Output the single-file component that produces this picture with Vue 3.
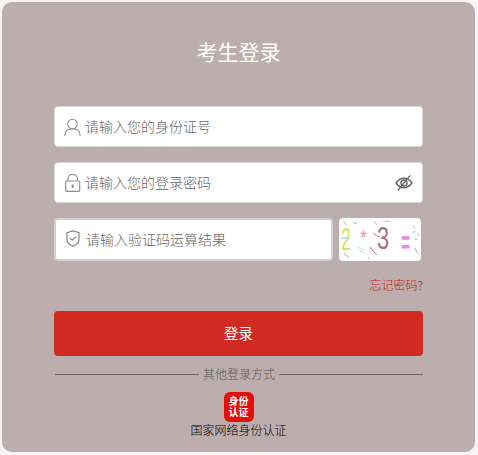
<script setup>
const noise = [
  { d: 'M5 3l2 4', c: '#c8c8a8' },
  { d: 'M14 4l4 2', c: '#8fc4b4' },
  { d: 'M35 3l3 4', c: '#c8b8c0' },
  { d: 'M44 3q4 1 7 0', c: '#93cfc0' },
  { d: 'M74 7l2 4', c: '#9cc4c4' },
  { d: 'M78 15l2 3', c: '#a8c8c8' },
  { d: 'M73 15q2-2 4-1', c: '#a0e0d8' },
  { d: 'M75 21q2 1 4 0', c: '#a0e0d8' },
  { d: 'M76 30l3 6', c: '#b8a8b8' },
  { d: 'M19 29q3 3 7 3', c: '#94ecd4' },
  { d: 'M21 33l3 1', c: '#94ecd4' },
  { d: 'M31 29l3 4', c: '#a86c7c' },
  { d: 'M34 33l4 4', c: '#b8808c' },
  { d: 'M5 35l5 5', c: '#b8a8b8' },
  { d: 'M29 39l1 2', c: '#a8c8d0' },
  { d: 'M34 15q3 3 7 4', c: '#c47c90' },
  { d: 'M2 20h8', c: '#8cc8d8' }
]
</script>

<template>
  <main class="card">
    <h1 class="title">考生登录</h1>

    <div class="field">
      <svg class="icon" viewBox="0 0 17 18" fill="none" stroke="#8f8f8c" stroke-width="1.100">
        <circle cx="8.500" cy="6" r="4.800" />
        <path d="M.8 17.500c.2-4.300 3.200-6.700 7.700-6.700s7.500 2.400 7.700 6.700" stroke-linecap="round" />
      </svg>
      <span class="placeholder">请输入您的身份证号</span>
    </div>

    <div class="field">
      <svg class="icon" viewBox="0 0 17 18" fill="none" stroke="#8f8f8c" stroke-width="1.200">
        <rect x="1.700" y="7" width="14" height="10.300" rx="1" />
        <path d="M4 7V5a4.700 4.700 0 0 1 9.400 0v2" />
        <rect x="7.700" y="10.500" width="2" height="3.500" fill="#8f8f8c" stroke="none" />
      </svg>
      <span class="placeholder">请输入您的登录密码</span>
      <svg class="eye" viewBox="0 0 20 18" fill="none" stroke="#666" stroke-width="1.600">
        <path d="M1 9c2.500-3.600 5.400-5.400 9-5.400S16.500 5.400 19 9c-2.500 3.600-5.400 5.400-9 5.400S3.500 12.600 1 9z" />
        <circle cx="10" cy="9" r="3.400" />
        <path d="M3.500 17L16.500 1" stroke-linecap="round" />
      </svg>
    </div>

    <div class="captcha-row">
      <div class="field captcha-field">
        <svg class="icon shield" viewBox="0 0 14 17" fill="none" stroke="#777" stroke-width="1.100">
          <path d="M7 .8l6 2v7c0 3-2.600 5-6 6.400-3.400-1.400-6-3.400-6-6.400v-7z" stroke-linejoin="round" />
          <path d="M4.200 8.300l2 1.900 3.600-3.400" stroke-linecap="round" stroke-linejoin="round" />
        </svg>
        <span class="placeholder">请输入验证码运算结果</span>
      </div>
      <div class="captcha-img">
        <span class="c c1">2</span>
        <span class="c c2">*</span>
        <span class="c c3">3</span>
        <span class="c c4">=</span>
        <svg class="captcha-noise" viewBox="0 0 82 43" fill="none">
          <path v-for="n in noise" :key="n.d" :d="n.d" :stroke="n.c" stroke-width="1" />
        </svg>
      </div>
    </div>

    <div class="forgot-row"><a class="forgot">忘记密码?</a></div>

    <button class="submit" type="button"><span>登录</span></button>

    <div class="divider"><span>其他登录方式</span></div>

    <div class="identity">
      <div class="badge"><span>身份</span><span>认证</span></div>
      <div class="identity-label">国家网络身份认证</div>
    </div>
  </main>
</template>

<style scoped>
.card {
  box-sizing: border-box;
  width: 473px;
  height: 450px;
  margin: 2px 0 0 2px;
  padding: 0 52px;
  background: #bdaeae;
  border-radius: 10px;
  font-family: "Noto Sans CJK SC", "Liberation Sans", sans-serif;
  overflow: hidden;
}
.title {
  margin: 0;
  padding-top: 35px;
  height: 68px;
  box-sizing: border-box;
  line-height: 28px;
  font-size: 21px;
  font-weight: 400;
  color: #fff;
  text-align: center;
}
.field {
  box-sizing: border-box;
  display: flex;
  align-items: center;
  width: 369px;
  height: 41px;
  margin-bottom: 15px;
  padding: 0 9px 0 9px;
  background: #fff;
  border: 1px solid #dcd6d6;
  border-radius: 4px;
}
.title + .field { margin-top: 36px; }
.icon {
  flex: none;
  width: 17px;
  height: 18px;
  margin-right: 4px;
}
.placeholder {
  font-size: 14px;
  font-weight: 300;
  line-height: 20px;
  color: #666;
  margin-top: -2px;
}
.eye {
  width: 18px;
  height: 16px;
  margin-left: auto;
}
.captcha-row {
  display: flex;
  align-items: stretch;
  height: 43px;
}
.captcha-field {
  width: 279px;
  height: 43px;
  margin: 0;
  border: 2px solid #d4d0d4;
  padding: 0 9px;
}
.shield {
  width: 14px;
  height: 17px;
  margin: 0 6px 3px 1px;
}
.captcha-img {
  position: relative;
  flex: none;
  width: 82px;
  height: 43px;
  margin-left: 6px;
  background: #fff;
  border-radius: 4px;
  overflow: hidden;
  font-family: "Liberation Sans", sans-serif;
}
.captcha-noise {
  position: absolute;
  inset: 0;
  width: 100%;
  height: 100%;
}
.c {
  position: absolute;
  line-height: 1;
  transform-origin: left top;
}
.c1 { left: 2px; top: 5px; font-size: 32px; color: #d2e85a; transform: scaleX(.55); }
.c2 { left: 21px; top: 9px; font-size: 22px; color: #f090c8; transform: scaleX(.8); }
.c3 { left: 38px; top: 5px; font-size: 31px; color: #ab6a7e; transform: scaleX(.7); }
.c4 { left: 62px; top: 7px; font-size: 26px; font-weight: 700; color: #e68ee6; transform: scale(.6, 1.3); }
.forgot-row {
  display: flex;
  justify-content: flex-end;
  width: 369px;
  height: 50px;
  padding-top: 15px;
  box-sizing: border-box;
}
.forgot {
  font-size: 12px;
  font-weight: 300;
  line-height: 18px;
  color: #c41a12;
}
.submit {
  display: block;
  width: 369px;
  height: 45px;
  padding: 0 0 2px;
  border: 0;
  border-radius: 4px;
  background: #d12a22;
  color: #fff;
  font: inherit;
  font-size: 14.500px;
}
.divider {
  display: flex;
  align-items: center;
  gap: 4px;
  width: 368px;
  height: 20px;
  margin: 8px 0 0 1px;
  font-size: 12px;
  font-weight: 300;
  line-height: 18px;
  color: #555;
}
.divider::before,
.divider::after {
  content: "";
  flex: 1;
  height: 1px;
  background: #666;
}
.identity {
  display: flex;
  flex-direction: column;
  align-items: center;
  margin-top: 8px;
}
.badge {
  box-sizing: border-box;
  display: flex;
  flex-direction: column;
  align-items: center;
  justify-content: center;
  width: 30px;
  height: 30px;
  border-radius: 6px;
  background: #e20f0b;
  color: #fff;
  font-family: "Liberation Serif", "Noto Sans CJK SC", serif;
  font-size: 10px;
  font-weight: 700;
  line-height: 11.500px;
  text-align: center;
}
.identity-label {
  margin-top: 0;
  font-size: 12px;
  font-weight: 300;
  line-height: 16px;
  color: #000;
}
</style>

<style>
html, body { background: #f6f4f4; }
</style>
